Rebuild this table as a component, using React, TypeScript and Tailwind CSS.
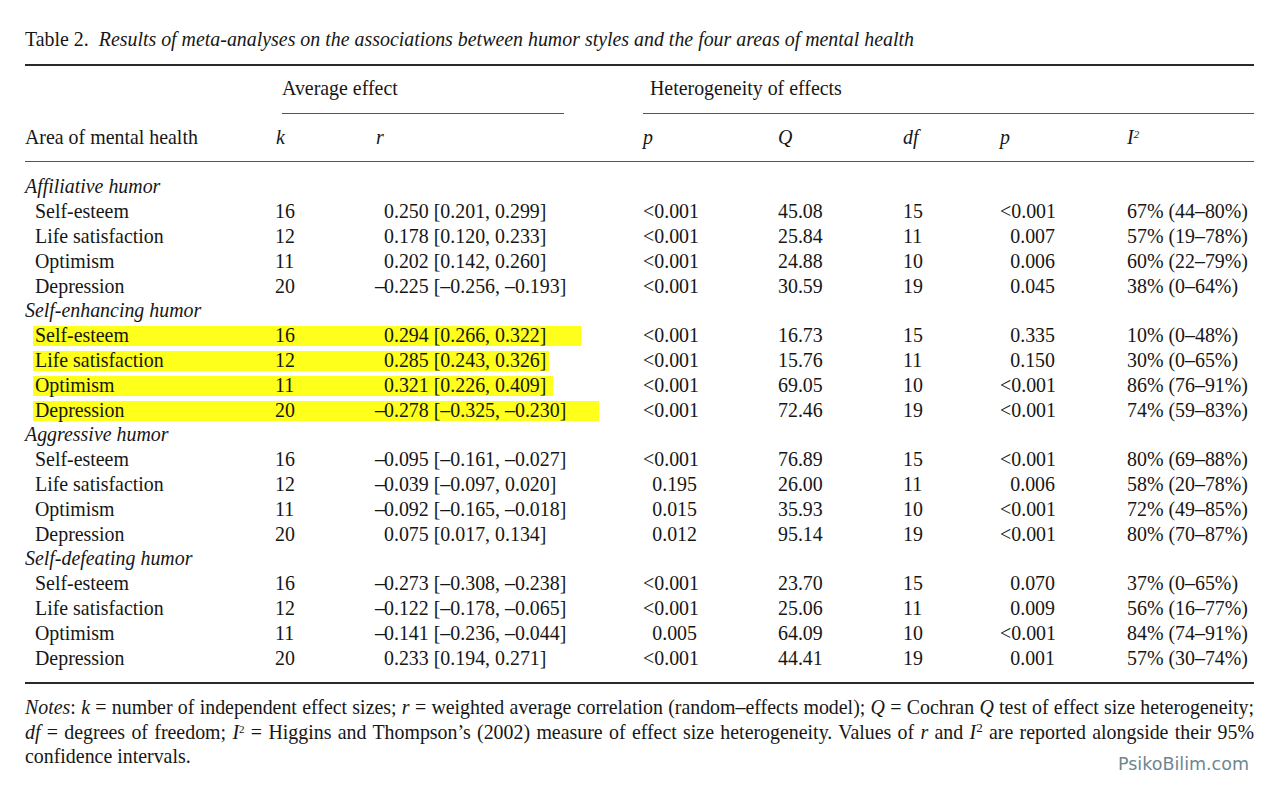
const cols = 'grid grid-cols-[250px_100px_268px_135px_125px_97px_127px_1fr]'

type Row = {
  area: string
  k: string
  r: string
  p1: string
  q: string
  df: string
  p2: string
  i2: string
  mark?: string
}

type Group = { title: string; rows: Row[] }

const groups: Group[] = [
  {
    title: 'Affiliative humor',
    rows: [
      { area: 'Self-esteem', k: '16', r: '0.250 [0.201, 0.299]', p1: '<0.001', q: '45.08', df: '15', p2: '<0.001', i2: '67% (44–80%)' },
      { area: 'Life satisfaction', k: '12', r: '0.178 [0.120, 0.233]', p1: '<0.001', q: '25.84', df: '11', p2: '0.007', i2: '57% (19–78%)' },
      { area: 'Optimism', k: '11', r: '0.202 [0.142, 0.260]', p1: '<0.001', q: '24.88', df: '10', p2: '0.006', i2: '60% (22–79%)' },
      { area: 'Depression', k: '20', r: '–0.225 [–0.256, –0.193]', p1: '<0.001', q: '30.59', df: '19', p2: '0.045', i2: '38% (0–64%)' },
    ],
  },
  {
    title: 'Self-enhancing humor',
    rows: [
      { area: 'Self-esteem', k: '16', r: '0.294 [0.266, 0.322]', p1: '<0.001', q: '16.73', df: '15', p2: '0.335', i2: '10% (0–48%)', mark: 'w-[548px]' },
      { area: 'Life satisfaction', k: '12', r: '0.285 [0.243, 0.326]', p1: '<0.001', q: '15.76', df: '11', p2: '0.150', i2: '30% (0–65%)', mark: 'w-[516px]' },
      { area: 'Optimism', k: '11', r: '0.321 [0.226, 0.409]', p1: '<0.001', q: '69.05', df: '10', p2: '<0.001', i2: '86% (76–91%)', mark: 'w-[520px]' },
      { area: 'Depression', k: '20', r: '–0.278 [–0.325, –0.230]', p1: '<0.001', q: '72.46', df: '19', p2: '<0.001', i2: '74% (59–83%)', mark: 'w-[566px]' },
    ],
  },
  {
    title: 'Aggressive humor',
    rows: [
      { area: 'Self-esteem', k: '16', r: '–0.095 [–0.161, –0.027]', p1: '<0.001', q: '76.89', df: '15', p2: '<0.001', i2: '80% (69–88%)' },
      { area: 'Life satisfaction', k: '12', r: '–0.039 [–0.097, 0.020]', p1: '0.195', q: '26.00', df: '11', p2: '0.006', i2: '58% (20–78%)' },
      { area: 'Optimism', k: '11', r: '–0.092 [–0.165, –0.018]', p1: '0.015', q: '35.93', df: '10', p2: '<0.001', i2: '72% (49–85%)' },
      { area: 'Depression', k: '20', r: '0.075 [0.017, 0.134]', p1: '0.012', q: '95.14', df: '19', p2: '<0.001', i2: '80% (70–87%)' },
    ],
  },
  {
    title: 'Self-defeating humor',
    rows: [
      { area: 'Self-esteem', k: '16', r: '–0.273 [–0.308, –0.238]', p1: '<0.001', q: '23.70', df: '15', p2: '0.070', i2: '37% (0–65%)' },
      { area: 'Life satisfaction', k: '12', r: '–0.122 [–0.178, –0.065]', p1: '<0.001', q: '25.06', df: '11', p2: '0.009', i2: '56% (16–77%)' },
      { area: 'Optimism', k: '11', r: '–0.141 [–0.236, –0.044]', p1: '0.005', q: '64.09', df: '10', p2: '<0.001', i2: '84% (74–91%)' },
      { area: 'Depression', k: '20', r: '0.233 [0.194, 0.271]', p1: '<0.001', q: '44.41', df: '19', p2: '0.001', i2: '57% (30–74%)' },
    ],
  },
]

const RValue = ({ value }: { value: string }) => {
  const neg = value.startsWith('–')
  return (
    <span className="flex">
      <span className="w-[9px] text-right">{neg ? '–' : ''}</span>
      <span>{neg ? value.slice(1) : value}</span>
    </span>
  )
}

const DataRow = ({ row }: { row: Row }) => (
  <div className={`${cols} relative h-[24.8px] items-center`}>
    {row.mark && (
      <span className={`absolute left-[8px] top-[3px] h-[20px] bg-[#ffff1c] ${row.mark}`} />
    )}
    <div className="relative pl-[10px]">{row.area}</div>
    <div className="relative">{row.k}</div>
    <div className="relative">
      <RValue value={row.r} />
    </div>
    <div>
      <span className="inline-block w-[54px] text-right">{row.p1}</span>
    </div>
    <div>{row.q}</div>
    <div>{row.df}</div>
    <div>
      <span className="inline-block w-[55px] text-right">{row.p2}</span>
    </div>
    <div>{row.i2}</div>
  </div>
)

const App = (): JSX.Element => {
  return (
    <div className="h-[797px] w-[1280px] overflow-hidden bg-white font-['Liberation_Serif',serif] text-[19.9px] leading-[24.8px] text-[#161616]">
      <div className="ml-[25px] w-[1229px] pt-[27px]">
        <p>
          Table 2.&nbsp; <i>Results of meta-analyses on the associations between humor styles and the four areas of mental health</i>
        </p>

        <div className="mt-[12px] border-t-2 border-[#2a2a2a]" />

        <div className={`${cols} mt-[10px]`}>
          <div className="col-start-2 col-span-2 flex flex-col">
            <span className="pl-[7px]">Average effect</span>
            <div className="ml-[7px] mt-[12px] w-[282px] border-t border-[#555]" />
          </div>
          <div className="col-start-4 col-span-5 flex flex-col">
            <span className="pl-[7px]">Heterogeneity of effects</span>
            <div className="mt-[12px] border-t border-[#555]" />
          </div>
        </div>

        <div className={`${cols} mt-[11px]`}>
          <div>Area of mental health</div>
          <div className="pl-[1px] italic">k</div>
          <div className="pl-[1px] italic">r</div>
          <div className="italic">p</div>
          <div className="italic">Q</div>
          <div className="italic">df</div>
          <div className="italic">p</div>
          <div className="italic">
            I<sup className="text-[11px]">2</sup>
          </div>
        </div>

        <div className="mt-[12px] border-t border-[#555]" />

        <div className="mt-[12px]">
          {groups.map((group) => (
            <div key={group.title}>
              <div className="h-[24.8px] italic">{group.title}</div>
              {group.rows.map((row) => (
                <DataRow key={group.title + row.area} row={row} />
              ))}
            </div>
          ))}
        </div>

        <div className="mt-[12px] border-t-2 border-[#2a2a2a]" />

        <p className="mt-[11px] text-justify leading-[24.5px]">
          <i>Notes</i>: <i>k</i> = number of independent effect sizes; <i>r</i> = weighted average correlation
          (random–effects model); <i>Q</i> = Cochran <i>Q</i> test of effect size heterogeneity; <i>df</i> = degrees of
          freedom; <i>I</i>
          <sup className="text-[11px]">2</sup> = Higgins and Thompson’s (2002) measure of effect size heterogeneity.
          Values of <i>r</i> and <i>I</i>
          <sup className="text-[13px]">2</sup> are reported alongside their 95% confidence intervals.
        </p>

        <div className="-mt-[17px] flex justify-end pr-[5px]">
          <span className="font-['DejaVu_Sans',sans-serif] text-[17.5px] leading-[24px] text-[#6e8691]">PsikoBilim.com</span>
        </div>
      </div>
    </div>
  )
}

export default App
